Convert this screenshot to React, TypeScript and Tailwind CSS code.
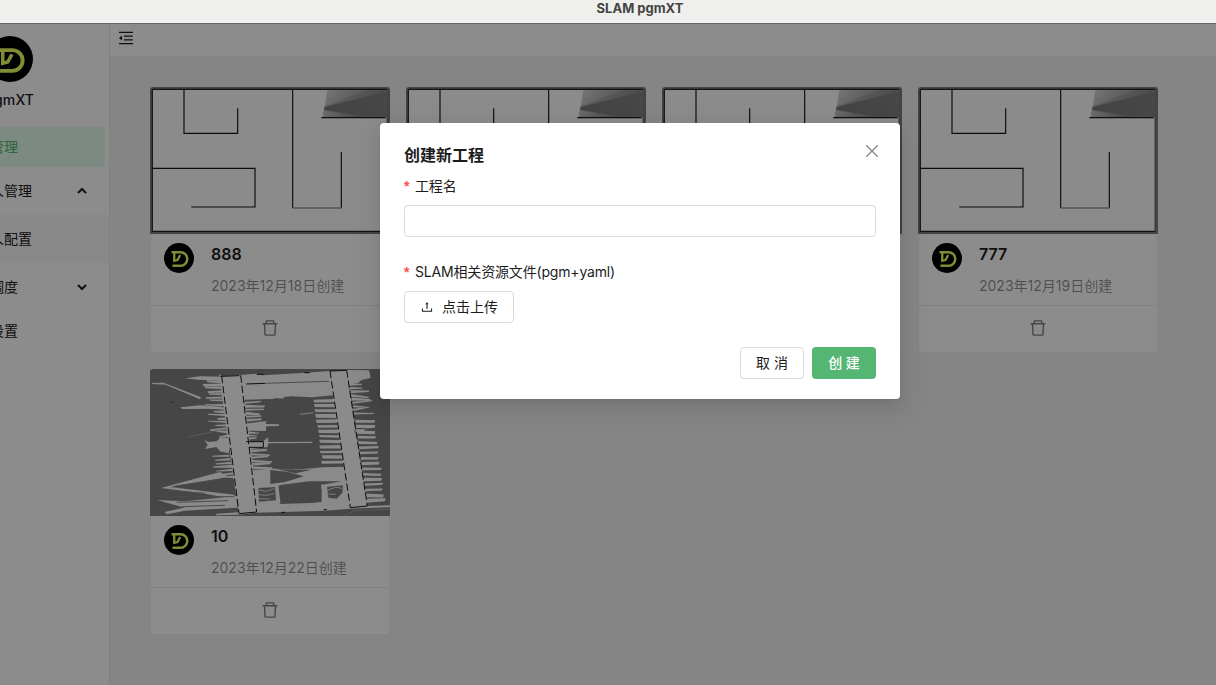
import { AiOutlineDelete, AiOutlineMenuFold, AiOutlineUpload } from "react-icons/ai";

function Logo({ className }: { className: string }) {
  return (
    <svg viewBox="0 0 60 60" className={className}>
      <circle cx="30" cy="30" r="30" fill="#000" />
      <path d="M15 18.500H33A13.500 13.500 0 0 1 33 45.500H17" fill="none" stroke="#ecff62" strokeWidth="5" />
      <path d="M20.500 18.500V35.500L27 34L32.500 24" fill="none" stroke="#ecff62" strokeWidth="4.600" />
    </svg>
  );
}

function MazeMap() {
  return (
    <svg viewBox="15 21 720 441" preserveAspectRatio="none" className="block h-[147px] w-full rounded-t-[3px]">
      <defs>
        <linearGradient id="rays" x1="0" y1="0" x2="1" y2="0.45">
          <stop offset="0" stopColor="#e0e0e0" />
          <stop offset="0.3" stopColor="#bcbcbc" />
          <stop offset="0.6" stopColor="#a0a0a0" />
          <stop offset="0.85" stopColor="#888888" />
          <stop offset="1" stopColor="#808080" />
        </linearGradient>
        <linearGradient id="rayCore" x1="0" y1="0" x2="1" y2="0">
          <stop offset="0" stopColor="#747474" />
          <stop offset="1" stopColor="#828282" />
        </linearGradient>
        <linearGradient id="rayLow" x1="0" y1="0" x2="1" y2="0">
          <stop offset="0" stopColor="#c4c4c4" />
          <stop offset="0.5" stopColor="#9a9a9a" />
          <stop offset="1" stopColor="#808080" />
        </linearGradient>
      </defs>
      <rect x="15" y="21" width="720" height="441" fill="#7c7c7c" />
      <rect x="22" y="28" width="704" height="426" fill="#fefefe" />
      <path d="M547 30H728V110H533L539 80Z" fill="url(#rays)" />
      <path d="M538 80L660 34H728V110H533Z" fill="#8e8e8e" opacity="0.5" />
      <path d="M538 82L728 34V110H620L538 92Z" fill="url(#rayCore)" opacity="0.85" />
      <path d="M537 90L660 110H533Z" fill="url(#rayLow)" />
      <path d="M727 30H735V106H727Z" fill="#7c7c7c" />
      <path d="M22 28H726M22 28V454H726" fill="none" stroke="#222" strokeWidth="3.500" />
      <path d="M726 104V454" fill="none" stroke="#666" strokeWidth="3" />
      <path
        d="M117 28V160H278V85M22 265H330V381H139M443 28V383M529 113H722M589 216V383"
        fill="none"
        stroke="#161616"
        strokeWidth="3.500"
      />
      <path d="M443 384H590" stroke="#666" strokeWidth="3.500" />
    </svg>
  );
}

function noise(n: number) {
  const v = Math.sin(n * 127.1 + 11.7) * 43758.5453;
  return v - Math.floor(v);
}

// Builds laser-scan spikes along a slanted wall; blunt sets the tip width relative to the root.
function spikes(x0: number, y0: number, x1: number, y1: number, count: number, length: number, jitter: number, slope: number, thick: number, blunt: number, seed: number) {
  const parts: string[] = [];
  for (let i = 0; i < count; i++) {
    const t = (i + 0.5) / count;
    const x = x0 + (x1 - x0) * t;
    const y = y0 + (y1 - y0) * t;
    const reach = length * (1 - jitter * noise(seed + i));
    const end = y + slope * (noise(seed + i + 50) - 0.5);
    const w = thick * (0.75 + 0.5 * noise(seed + i + 90));
    parts.push(
      `M${x.toFixed(1)} ${(y - w).toFixed(1)}L${(x + reach).toFixed(1)} ${(end - w * blunt).toFixed(1)}L${(x + reach * 0.96).toFixed(1)} ${(end + w * blunt).toFixed(1)}L${x.toFixed(1)} ${(y + w).toFixed(1)}Z`,
    );
  }
  return parts.join("");
}

const scanSpikes = [
  spikes(236, 46, 250, 120, 8, -72, 0.25, 6, 3.8, 0.7, 3),
  spikes(240, 124, 250, 226, 10, -66, 0.6, 12, 3.8, 0.45, 20),
  spikes(252, 276, 270, 350, 7, -62, 0.5, 12, 3.8, 0.4, 40),
  spikes(298, 117, 306, 180, 6, 62, 0.4, 8, 3.6, 0.7, 80),
  spikes(305, 207, 308, 234, 3, 40, 0.5, 8, 3, 0.5, 100),
  spikes(314, 262, 326, 322, 6, 62, 0.25, 8, 3.4, 0.7, 120),
  spikes(570, 108, 598, 308, 13, -69, 0.08, 3, 4.8, 0.9, 160),
  spikes(612, 62, 628, 160, 9, 64, 0.5, 14, 3.6, 0.5, 200),
  spikes(630, 170, 664, 424, 16, 60, 0.1, 6, 4.8, 0.8, 240),
].join("");

function ScanMap() {
  return (
    <svg viewBox="15 21 720 441" preserveAspectRatio="none" className="block h-[147px] w-full rounded-t-[3px]">
      <rect x="15" y="21" width="720" height="441" fill="#808080" />
      <g fill="#fbfbfb">
        <path d="M222 36L230 42L285 39L340 35L352 40L470 33L555 27L608 24L672 25L677 48L650 54L640 62L612 68L667 432L735 430V436L667 438L616 440L540 446L335 452L282 458L214 460V455L280 451Z" />
        <path d="M48 378L225 330L250 345L75 375L268 398V412L180 395ZM40 56L168 106L165 112L62 68L22 66V62L55 63ZM36 414L120 418L275 402V428L130 440ZM58 450L150 430L276 425V437L120 446L66 457ZM106 136L165 130L230 134V140L112 141ZM120 49L165 43L235 44V52L160 53Z" />
        <path d="M178 234L190 240L215 238L225 227L252 228V274L225 268L214 255L180 261L188 248Z" />
      </g>
      <path
        d="M298 113L350 112L382 111L392 108L415 110L416 105L440 103L500 106L563 100L596 314L585 318L440 322L385 320L326 326Z"
        fill="#808080"
      />
      <g fill="#fbfbfb">
        <path d={scanSpikes} />
        <path d="M302 185L365 177L362 186L402 187V192L364 193L362 207L305 206ZM302 237L352 240L369 226L370 240L502 239V243L370 244L368 255L310 262Z" />
        <path d="M325 324L380 320L440 324L505 319L530 316L590 314L602 374L332 380Z" />
      </g>
      <path d="M464 157L505 152" stroke="#e8e8e8" strokeWidth="3" />
      <g fill="#808080">
        <path d="M376 324L430 330L476 343L420 360L376 366Z" />
        <path d="M395 322L500 323L452 334ZM412 368L492 358L590 358L545 366L530 368L530 420L500 423L404 426L398 372Z" />
        <path d="M340 378L390 375L393 415L342 419ZM546 374L594 370L592 392L575 410L550 407Z" />
      </g>
      <path
        d="M342 384L365 388L388 380M340 398L366 400L388 394M342 410L374 411M546 385L572 376L592 379M550 396L572 397"
        fill="none"
        stroke="#e0e0e0"
        strokeWidth="3"
      />
      <path d="M398 372L404 424M530 368L540 420" stroke="#fbfbfb" strokeWidth="5" />
      <path d="M130 225L245 200M600 461L628 446L735 442" fill="none" stroke="#b4b4b4" strokeWidth="2" />
      <path d="M80 404L268 404M95 421L250 416M70 385L180 394M110 434L240 430M90 372L210 354" fill="none" stroke="#8a8a8a" strokeWidth="3" />
      <path d="M230 44L283 42L332 448L284 452ZM557 30L603 28L663 430L618 434Z" fill="#fdfdfd" />
      <path d="M230 42L282 454M287 40L335 450M555 27L616 437M605 25L667 432" stroke="#181818" strokeWidth="3" strokeDasharray="22 9" />
      <path
        d="M226 43L283 41M282 455L335 450M555 27L605 25M616 437L667 432M304 66L360 64M304 239H355V256H312M335 37H356M478 32H494M410 451H420M536 443H546"
        fill="none"
        stroke="#181818"
        strokeWidth="3"
      />
      <path d="M360 64L480 60L552 58" fill="none" stroke="#777" strokeWidth="2.500" />
      <path d="M75 121H86" stroke="#555" strokeWidth="3" />
      <path d="M626 205H658" stroke="#fff" strokeWidth="9" />
      <path d="M629 211L632 200H656" fill="none" stroke="#333" strokeWidth="2" />
    </svg>
  );
}

type Project = { name: string; date: string; map: "maze" | "scan" };

const projects: Project[] = [
  { name: "888", date: "2023年12月18日创建", map: "maze" },
  { name: "", date: "", map: "maze" },
  { name: "", date: "", map: "maze" },
  { name: "777", date: "2023年12月19日创建", map: "maze" },
  { name: "10", date: "2023年12月22日创建", map: "scan" },
];

function ProjectCard({ name, date, map }: Project) {
  return (
    <article className="h-[266px] w-60 rounded bg-white">
      {map === "maze" ? <MazeMap /> : <ScanMap />}
      <div className="flex h-[119px] flex-col rounded-b border-x border-b border-[#f0f0f0]">
        {name && (
          <>
            <div className="flex h-[72px] border-b border-[#ebebeb] pt-[9px] pl-[13px]">
              <Logo className="size-[30px] shrink-0" />
              <div className="pl-[17px]">
                <h3 className="h-[22px] text-[16px] leading-[22px] font-semibold text-[#1c1c1c]">{name}</h3>
                <p className="mt-[10px] text-[14px] leading-[22px] whitespace-nowrap text-black/45">{date}</p>
              </div>
            </div>
            <div className="flex flex-1 items-center justify-center pb-[3px] text-[20px] text-black/50">
              <AiOutlineDelete />
            </div>
          </>
        )}
      </div>
    </article>
  );
}

function Chevron({ up = false }: { up?: boolean }) {
  return (
    <svg viewBox="0 0 10 8" className="h-2 w-[10px]">
      <path d={up ? "M1 6L5 2L9 6" : "M1 2L5 6L9 2"} fill="none" stroke="#1c1c1c" strokeWidth="2" />
    </svg>
  );
}

function MenuLabel({ children }: { children: string }) {
  return <span className="flex w-8 shrink-0 justify-end whitespace-nowrap">{children}</span>;
}

function Sidebar() {
  return (
    <aside className="w-[110px] shrink-0 overflow-hidden border-r border-[#ebebeb] bg-white text-[14px] leading-[22px] text-[#1c1c1c]">
      <Logo className="mt-3 -ml-[13px] size-[46px]" />
      <div className="mt-[7px] flex w-[34px] justify-end text-[14px] font-medium tracking-[0.1px]">gmXT</div>
      <nav className="mt-4">
        <div className="flex h-10 w-[105px] items-center rounded-r bg-[#e4fcec]">
          <span className="flex w-[18px] shrink-0 justify-end whitespace-nowrap text-[#55b674]">管理</span>
        </div>
        <div className="flex h-12 items-center">
          <MenuLabel>人管理</MenuLabel>
          <span className="ml-[45px]">
            <Chevron up />
          </span>
        </div>
        <div className="flex h-12 items-center bg-[#f8f8f8]">
          <MenuLabel>人配置</MenuLabel>
        </div>
        <div className="flex h-12 items-center">
          <span className="flex w-[18px] shrink-0 justify-end whitespace-nowrap">调度</span>
          <span className="ml-[59px]">
            <Chevron />
          </span>
        </div>
        <div className="flex h-10 items-center">
          <span className="flex w-[18px] shrink-0 justify-end whitespace-nowrap">设置</span>
        </div>
      </nav>
    </aside>
  );
}

function FieldLabel({ children }: { children: string }) {
  return (
    <label className="flex h-[22px] items-center text-[14px] leading-[22px] tracking-[-0.17px]">
      <span className="mr-[4px] w-[7px] font-['Liberation_Sans'] font-bold text-[#ff4d4f]">*</span>
      {children}
    </label>
  );
}

function ProjectDialog() {
  return (
    <section
      role="dialog"
      className="relative h-[276px] w-[520px] rounded bg-white px-6 pt-[21px] text-[#1c1c1c] shadow-[0_6px_16px_rgba(0,0,0,0.08),0_3px_6px_-4px_rgba(0,0,0,0.12),0_9px_28px_8px_rgba(0,0,0,0.05)]"
    >
      <button className="absolute top-[22px] right-[22px]" aria-label="关闭">
        <svg viewBox="0 0 12 12" className="size-3">
          <path d="M0.300 0.300L11.700 11.700M11.700 0.300L0.300 11.700" stroke="#858585" strokeWidth="1.300" />
        </svg>
      </button>
      <h2 className="h-[22px] text-[16px] leading-[22px] font-semibold">创建新工程</h2>
      <div className="mt-[9px]">
        <FieldLabel>工程名</FieldLabel>
        <input className="mt-[8px] block h-8 w-full rounded border border-[#d9d9d9] px-3 outline-none" />
      </div>
      <div className="mt-6">
        <FieldLabel>SLAM相关资源文件(pgm+yaml)</FieldLabel>
        <button className="mt-[8px] flex h-8 w-[110px] items-center gap-2 rounded border border-[#d9d9d9] pb-[2px] pl-[15px] text-[14px]">
          <AiOutlineUpload className="translate-y-px" />
          点击上传
        </button>
      </div>
      <div className="mt-6 flex justify-end gap-2 text-[14px]">
        <button className="h-8 w-16 rounded border border-[#d9d9d9] pb-[2px]">取 消</button>
        <button className="h-8 w-16 rounded bg-[#55b674] pb-[2px] font-medium text-white">创 建</button>
      </div>
    </section>
  );
}

export default function App() {
  return (
    <div className="flex h-[685px] w-[1216px] flex-col overflow-hidden bg-white font-['Inter','Noto_Sans_CJK_SC',sans-serif]">
      <div className="flex h-6 shrink-0 justify-center border-b border-[#656565] bg-[#efefed] pl-16 text-[13px] leading-[17px] font-bold text-[#444]">
        SLAM pgmXT
      </div>
      <div className="relative flex flex-1">
        <Sidebar />
        <main className="flex-1 bg-[#f2f2f2]">
          <header className="flex h-8 items-center bg-white pb-1 pl-[7px] text-[18px] text-[#1c1c1c]">
            <AiOutlineMenuFold />
          </header>
          <div className="grid grid-cols-[repeat(4,240px)] gap-4 pt-[31px] pl-10">
            {projects.map((project, index) => (
              <ProjectCard key={index} {...project} />
            ))}
          </div>
        </main>
        <div className="absolute inset-0 flex items-start justify-center bg-black/45 pt-[99px] pl-16">
          <ProjectDialog />
        </div>
      </div>
    </div>
  );
}
